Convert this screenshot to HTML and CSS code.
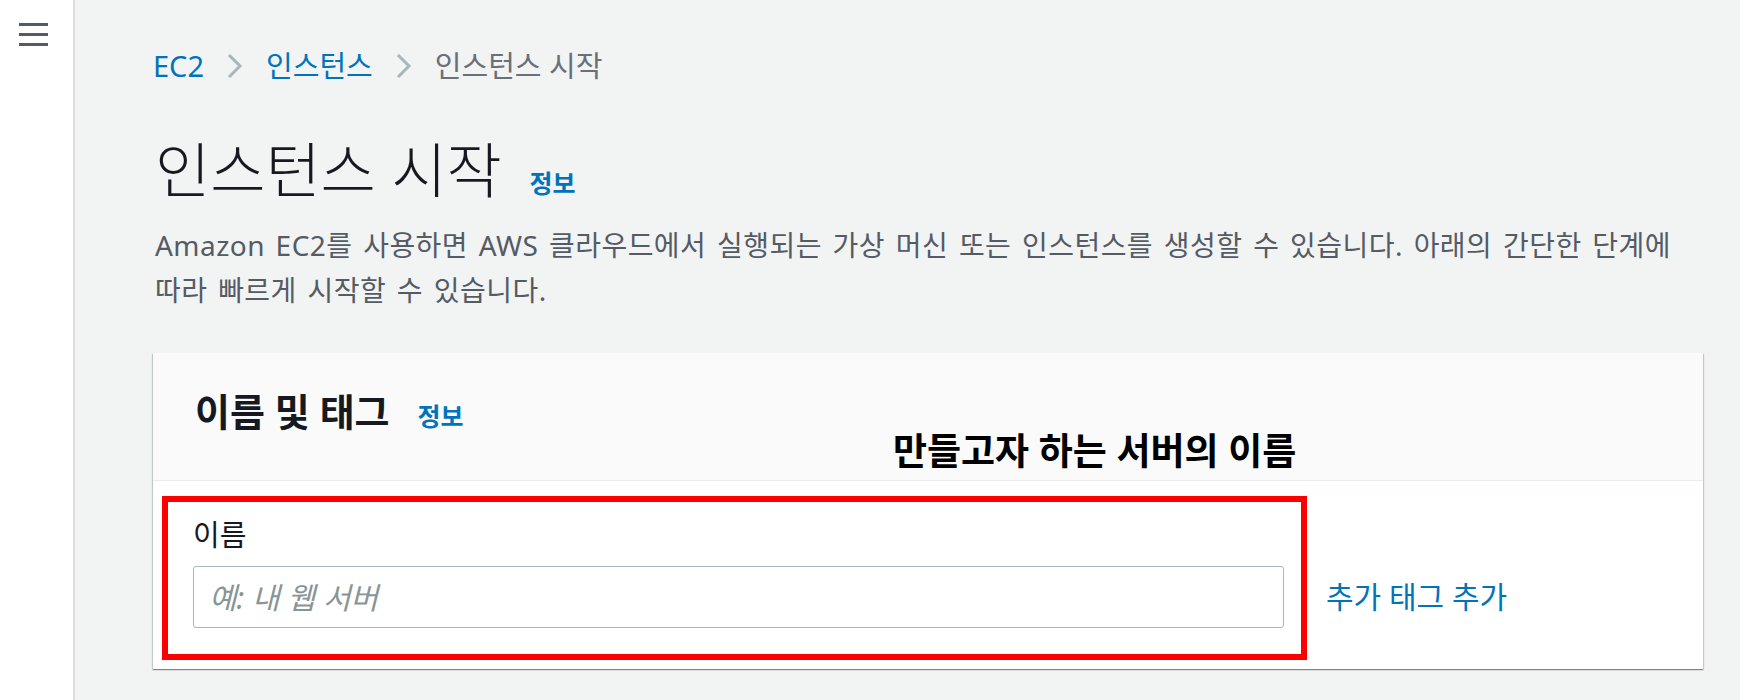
FILE: index.html
```html
<!DOCTYPE html>
<html lang="ko">
<head>
  <meta charset="UTF-8" />
  <title>인스턴스 시작</title>
  <link rel="stylesheet" href="styles.css">
</head>
<body>
  <nav class="sidebar">
    <button class="menu-toggle" aria-label="메뉴">
      <span></span><span></span><span></span>
    </button>
  </nav>

  <main class="content">
    <div class="breadcrumb">
      <a href="#">EC2</a>
      <svg class="crumb-sep" width="16" height="26" viewBox="0 0 16 26"><polyline points="2,2 13,13 2,24" /></svg>
      <a href="#">인스턴스</a>
      <svg class="crumb-sep" width="16" height="26" viewBox="0 0 16 26"><polyline points="2,2 13,13 2,24" /></svg>
      <span class="current">인스턴스 시작</span>
    </div>

    <h1 class="page-title">인스턴스 시작 <a href="#" class="info">정보</a></h1>
    <p class="page-desc">Amazon EC2를 사용하면 AWS 클라우드에서 실행되는 가상 머신 또는 인스턴스를 생성할 수 있습니다. 아래의 간단한 단계에 따라 빠르게 시작할 수 있습니다.</p>

    <section class="card">
      <div class="card-header">
        <h2>이름 및 태그 <a href="#" class="info">정보</a></h2>
      </div>
      <div class="card-body">
        <div class="field">
          <label for="serverName">이름</label>
          <input type="text" id="serverName" placeholder="예: 내 웹 서버" />
        </div>
        <a href="#" class="add-tags">추가 태그 추가</a>
      </div>

      <!-- annotation over the screenshot -->
      <div class="note">만들고자 하는 서버의 이름</div>
      <div class="highlight"></div>
    </section>
  </main>
</body>
</html>
```

FILE: styles.css
```css
body {
  margin: 0;
  height: 700px;
  display: flex;
  background-color: #f2f3f3;
  font-family: "Noto Sans", "Noto Sans CJK KR", sans-serif;
  color: #16191f;
  overflow: hidden;
}

a {
  color: #0073bb;
  text-decoration: none;
}

.sidebar {
  width: 73px;
  flex: 0 0 73px;
  background-color: #fff;
  border-right: 2px solid #dadede;
}

.menu-toggle {
  display: flex;
  flex-direction: column;
  gap: 7px;
  margin: 23px 0 0 19px;
  padding: 0;
  border: none;
  background: none;
  cursor: pointer;
}

.menu-toggle span {
  display: block;
  width: 29px;
  height: 3px;
  background-color: #545b64;
}

.content {
  flex: 1;
  padding: 48px 37px 0 78px;
}

.breadcrumb {
  display: flex;
  align-items: center;
  gap: 23px;
  font-size: 29px;
  line-height: 36px;
}

.crumb-sep polyline {
  fill: none;
  stroke: #aab7b8;
  stroke-width: 3;
}

.breadcrumb .current {
  color: #687078;
}

.page-title {
  margin: 50px 0 0 2px;
  font-size: 60px;
  font-weight: 300;
  line-height: 72px;
}

.info {
  margin-left: 12px;
  font-size: 25px;
  font-weight: 700;
  line-height: 1;
}

.page-desc {
  margin: 17px 0 0 2px;
  font-size: 28px;
  line-height: 45px;
  letter-spacing: 0.45px;
  word-spacing: 3px;
  word-break: keep-all;
  color: #545b64;
}

.card {
  position: relative;
  margin-top: 40px;
  background-color: #fff;
  box-shadow: 0 1px 1px 0 rgba(0, 28, 36, 0.3), 1px 1px 1px 0 rgba(0, 28, 36, 0.15), -1px 1px 1px 0 rgba(0, 28, 36, 0.15);
}

.card-header {
  padding: 36px 42px 46px;
  background-color: #fafafa;
  border-bottom: 1px solid #eaeded;
}

.card-header h2 {
  margin: 0;
  font-size: 38px;
  font-weight: 700;
  line-height: 45px;
}

.card-header .info {
  margin-left: 18px;
}

.card-body {
  display: flex;
  align-items: flex-end;
  gap: 42px;
  padding: 37px 42px 41px 40px;
}

.field {
  display: flex;
  flex-direction: column;
  gap: 14px;
  width: 1091px;
}

.field label {
  font-size: 29px;
  line-height: 34px;
}

.field input {
  height: 62px;
  box-sizing: border-box;
  padding: 0 15px;
  border: 1px solid #aab7b8;
  border-radius: 3px;
  font-family: inherit;
  font-size: 30px;
}

.field input::placeholder {
  color: #879596;
  font-style: italic;
}

.add-tags {
  font-size: 30px;
  line-height: 62px;
}

.note {
  position: absolute;
  left: 740px;
  top: 75px;
  font-size: 37px;
  font-weight: 700;
  line-height: 45px;
  color: #000;
}

.highlight {
  position: absolute;
  left: 9px;
  top: 143px;
  width: 1145px;
  height: 164px;
  box-sizing: border-box;
  border: 6px solid #ff0000;
}
```
